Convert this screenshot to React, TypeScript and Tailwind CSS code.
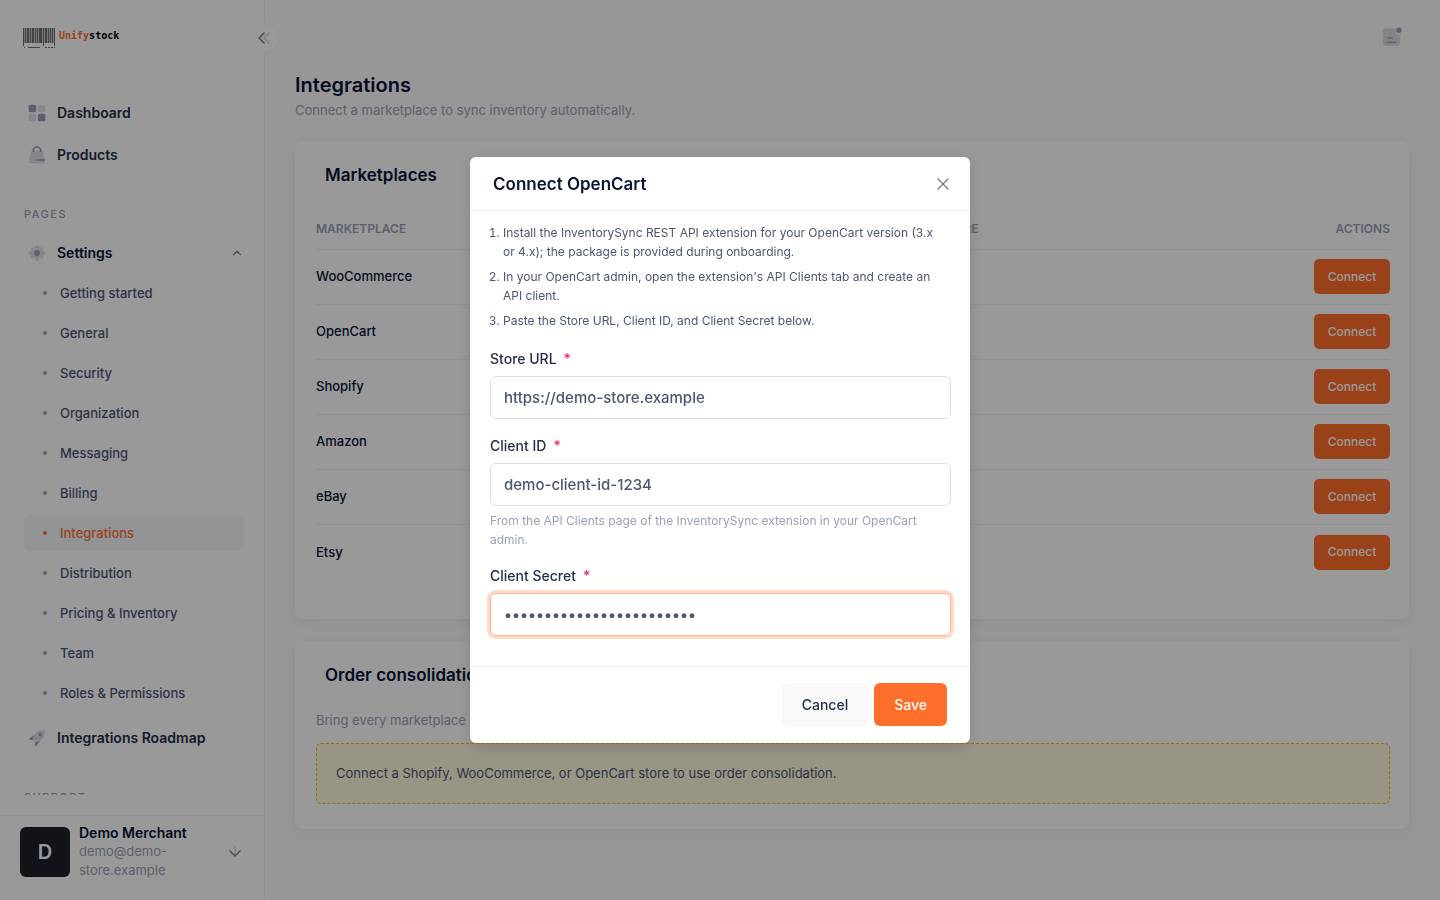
import React from 'react';
import { X, ChevronUp } from 'lucide-react';

const settingsLinks = [
  'Getting started',
  'General',
  'Security',
  'Organization',
  'Messaging',
  'Billing',
  'Integrations',
  'Distribution',
  'Pricing & Inventory',
  'Team',
  'Roles & Permissions',
];

const marketplaces = ['WooCommerce', 'OpenCart', 'Shopify', 'Amazon', 'eBay', 'Etsy'];

function Logo() {
  // x position and width of each barcode stripe
  const bars = [
    [0, 1], [2, 1], [4, 2], [7, 1], [9, 2], [12, 1], [14, 1], [16, 3],
    [20, 1], [22, 2], [25, 1], [27, 1], [29, 1], [31, 1],
  ];
  return (
    <a href="#" className="flex items-start gap-[3px]">
      <svg width="33" height="21" viewBox="0 0 33 21" fill="#6e7074">
        {bars.map(([x, w], i) => (
          <rect key={x} x={x} y="0" width={w} height={i === 0 || i === 8 || i === 13 ? 18 : 15} />
        ))}
        <path d="M0 0h32v15H0z" opacity=".4" />
        <path d="M1 19h1v1H1zM5 19h12v1H5zM22 19h2v1h-2zM25 19h2v1h-2zM28 19h2v1h-2zM31 19h1v1h-1z" />
      </svg>
      <span className="font-['DejaVu_Sans_Mono',monospace] text-[10px] leading-4 font-bold text-black">
        <span className="text-[#ff6f2c]">Unify</span>stock
      </span>
    </a>
  );
}

function DashboardIcon() {
  return (
    <svg width="20" height="20" viewBox="0 0 24 24" fill="#99a1b7">
      <rect x="2" y="2" width="9" height="9" rx="2" />
      <rect x="13" y="2" width="9" height="9" rx="2" opacity=".3" />
      <rect x="13" y="13" width="9" height="9" rx="2" />
      <rect x="2" y="13" width="9" height="9" rx="2" opacity=".3" />
    </svg>
  );
}

function ProductsIcon() {
  return (
    <svg width="20" height="20" viewBox="0 0 24 24" fill="#99a1b7">
      <path opacity=".35" d="M19.3 8.7c-.1-1-1-1.7-2-1.7H6.7c-1 0-1.900.7-2 1.700L2.500 19.800c-.1 1.200.8 2.200 2 2.200h15c1.200 0 2.100-1 2-2.200z" />
      <path d="M21.200 17H12c-.6 0-1 .4-1 1s.4 1 1 1h9.400zM6.500 8.500V6.800C6.500 3.900 9 1.500 12 1.500s5.500 2.400 5.500 5.300v1.700h-2V6.800c0-1.900-1.600-3.400-3.500-3.400S8.500 4.900 8.500 6.800v1.700z" />
    </svg>
  );
}

function SettingsIcon() {
  return (
    <svg width="20" height="20" viewBox="0 0 24 24" fill="#99a1b7">
      <path opacity=".35" d="M22.100 11.500v1c0 .8-.6 1.300-1.300 1.400l-1.900.2c-.2 0-.3.300-.2.500l.9 1.700c.4.700.1 1.500-.5 1.900l-.9.500c-.7.400-1.500.2-1.900-.5l-1-1.600-.6.3v2.200c0 1.600-1 2.300-2.700 2.300s-2.700-.7-2.700-2.300v-2.200l-.6-.3-1 1.600c-.4.700-1.200.9-1.900.5l-.9-.5c-.6-.4-.9-1.200-.5-1.900l.9-1.700c.1-.2 0-.5-.2-.5l-1.900-.2c-.7-.1-1.300-.6-1.300-1.400v-1c0-.8.6-1.300 1.300-1.400l1.900-.2c.2 0 .3-.3.2-.5l-.9-1.700c-.4-.7-.1-1.500.5-1.900l.9-.5c.7-.4 1.500-.2 1.900.5l1 1.600.6-.3V4.900C9.300 3.300 10.300 2.600 12 2.600s2.700.7 2.700 2.300v2.200l.6.300 1-1.600c.4-.7 1.200-.9 1.900-.5l.9.500c.6.4.9 1.200.5 1.900l-.9 1.700c-.1.200 0 .5.2.5l1.900.2c.7.1 1.300.6 1.300 1.400z" />
      <circle cx="12" cy="12" r="3.500" />
    </svg>
  );
}

function RocketIcon() {
  return (
    <svg width="20" height="20" viewBox="0 0 24 24" fill="#99a1b7">
      <path opacity=".35" d="M21.500 2.500c-5.500-.6-10 1.600-13 6.100L6.500 14l3.500 3.500 5.500-2c4.500-3 6.600-7.500 6-13z" />
      <path d="M8.500 8.600 2.500 13c-.5.400-.3 1.100.3 1.200l3.700.3zM15.400 15.500 11 21.500c-.4.500-1.100.3-1.200-.3l-.3-3.700z" />
      <circle cx="16" cy="8" r="2" />
    </svg>
  );
}

function NotificationIcon() {
  return (
    <svg width="22" height="22" viewBox="0 0 24 24" fill="#99a1b7">
      <path opacity=".35" d="M15.500 5c0-1 .3-1.800.8-2.500H5C3.300 2.500 2 3.800 2 5.500v13c0 1.700 1.300 3 3 3h13c1.700 0 3-1.300 3-3V8.700c-.5.2-1 .3-1.500.3-2.200 0-4-1.800-4-4z" />
      <path d="M12.500 14h-5c-.5 0-.8-.3-.8-.8s.3-.8.8-.8h5c.5 0 .8.3.8.8s-.3.8-.8.8zM16 18.500H7.500c-.5 0-.8-.3-.8-.8s.3-.8.8-.8H16c.5 0 .8.3.8.8s-.3.8-.8.8z" />
      <circle cx="19.500" cy="4.500" r="3" />
    </svg>
  );
}

function Sidebar() {
  return (
    <aside className="relative flex h-screen w-[265px] shrink-0 flex-col border-r border-[#f1f1f4] bg-white">
      <div className="px-[23px] pt-7">
        <Logo />
      </div>
      <button
        type="button"
        aria-label="Collapse sidebar"
        className="absolute top-6 -right-[14px] flex h-7 w-7 items-center justify-center rounded-full bg-white shadow-[0_0_3px_rgba(0,0,0,0.04)]"
      >
        <svg width="14" height="14" viewBox="0 0 14 14" fill="none" stroke="#78829d" strokeWidth="1.500" strokeLinecap="round" strokeLinejoin="round">
          <path d="M7 2 2 7l5 5" />
          <path opacity=".3" d="M12 2 7 7l5 5" />
        </svg>
      </button>

      <nav className="mt-[43px] mb-5 flex min-h-0 flex-1 flex-col overflow-hidden pr-5 pl-6 text-sm font-semibold text-[#252f4a]">
        <a href="#" className="flex h-[42px] shrink-0 items-center gap-[10px] pl-[3px]">
          <DashboardIcon />
          Dashboard
        </a>
        <a href="#" className="flex h-[42px] shrink-0 items-center gap-[10px] pl-[3px]">
          <ProductsIcon />
          Products
        </a>
        <div className="mt-[30px] text-[11px] leading-4 font-medium tracking-[1.500px] text-[#99a1b7]">PAGES</div>
        <button type="button" className="mt-[10px] flex h-[42px] shrink-0 items-center gap-[10px] pl-[3px] text-[#071437]">
          <SettingsIcon />
          Settings
          <ChevronUp size={14} strokeWidth={2} color="#78829d" className="ml-auto" />
        </button>
        <ul className="mt-px flex shrink-0 flex-col gap-1 text-[13px] font-medium text-[#4b5675]">
          {settingsLinks.map((label) => (
            <li key={label}>
              <a
                href="#"
                className={
                  label === 'Integrations'
                    ? 'flex h-9 items-center gap-[13px] rounded-md bg-[#f4f7fa] pl-[19px] text-[#ff6f2c]'
                    : 'flex h-9 items-center gap-[13px] pl-[19px]'
                }
              >
                <span
                  className={
                    label === 'Integrations'
                      ? 'h-1 w-1 rounded-full bg-[#ff6f2c]'
                      : 'h-1 w-1 rounded-full bg-[#99a1b7]'
                  }
                />
                {label}
              </a>
            </li>
          ))}
        </ul>
        <a href="#" className="mt-[6px] flex h-[42px] shrink-0 items-center gap-[10px] pl-[3px]">
          <RocketIcon />
          Integrations Roadmap
        </a>
        <div className="mt-[30px] shrink-0 text-[11px] leading-4 font-medium tracking-[1.500px] text-[#99a1b7]">SUPPORT</div>
      </nav>

      <div className="flex h-[85px] shrink-0 items-start border-t border-[#f1f1f4] pt-2 pr-[22px] pl-5">
        <div className="mt-[3px] flex h-[50px] w-[50px] shrink-0 items-center justify-center rounded-md bg-[#1e2129] text-xl font-semibold text-white">
          D
        </div>
        <div className="ml-[9px] w-[125px]">
          <div className="text-sm leading-[18px] font-semibold text-[#071437]">Demo Merchant</div>
          <div className="w-24 text-[13px] leading-[19px] text-[#99a1b7]">demo@demo-store.example</div>
        </div>
        <button type="button" aria-label="Account menu" className="mt-5 ml-auto">
          <svg width="14" height="14" viewBox="0 0 14 14" fill="none" stroke="#78829d" strokeWidth="1.500" strokeLinecap="round" strokeLinejoin="round">
            <path d="m2 7 5 5 5-5" />
            <path opacity=".3" d="M7 2v10" />
          </svg>
        </button>
      </div>
    </aside>
  );
}

function Marketplaces() {
  return (
    <section className="rounded-lg bg-white pr-[19px] pb-[39px] pl-[21px] shadow-[0_3px_12px_rgba(0,0,0,0.06)]">
      <h2 className="px-[9px] pt-[22px] text-[17px] leading-6 font-semibold text-[#071437]">Marketplaces</h2>
      <table className="mt-5 w-full table-fixed text-[13px]">
        <thead>
          <tr className="h-[42px] border-b border-[#f1f1f4] text-xs text-[#99a1b7]">
            <th className="w-[30%] pt-[3px] text-left font-semibold">MARKETPLACE</th>
            <th className="w-[28%] pt-[3px] text-left font-semibold">STATUS</th>
            <th className="pt-[3px] text-left font-semibold">STORE</th>
            <th className="w-[110px] pt-[3px] text-right font-semibold">ACTIONS</th>
          </tr>
        </thead>
        <tbody>
          {marketplaces.map((name) => (
            <tr key={name} className="h-[55px] border-b border-[#f1f1f4] last:h-14 last:border-b-0">
              <td className="font-medium text-[#071437]">{name}</td>
              <td />
              <td />
              <td className="text-right">
                <button type="button" className="h-[35px] w-[76px] rounded-[5px] bg-[#ff6f2c] text-xs font-medium text-white">
                  Connect
                </button>
              </td>
            </tr>
          ))}
        </tbody>
      </table>
    </section>
  );
}

function OrderConsolidation() {
  return (
    <section className="mt-[22px] rounded-lg bg-white pr-[19px] pb-[25px] pl-[21px] shadow-[0_3px_12px_rgba(0,0,0,0.06)]">
      <h2 className="px-[9px] pt-[22px] text-[17px] leading-6 font-semibold text-[#071437]">Order consolidation</h2>
      <p className="mt-[23px] text-[13px] leading-5 text-[#99a1b7]">Bring every marketplace order into a single store.</p>
      <div className="mt-[13px] rounded-[5px] border border-dashed border-[#f6c000] bg-[#fff8dd] px-[19px] py-5 text-[13px] leading-[19px] text-[#4b5675]">
        Connect a Shopify, WooCommerce, or OpenCart store to use order consolidation.
      </div>
    </section>
  );
}

type FieldProps = {
  id: string;
  label: string;
  value: string;
  type?: string;
  hint?: string;
  focused?: boolean;
};

function Field({ id, label, value, type = 'text', hint, focused }: FieldProps) {
  return (
    <div>
      <label htmlFor={id} className="block text-sm leading-5 font-medium text-[#252f4a]">
        {label}
        <span className="ml-[7px] text-[#f8285a]">*</span>
      </label>
      <input
        id={id}
        type={type}
        defaultValue={value}
        className={
          focused
            ? 'mt-[7px] block h-[43px] w-full rounded-md border border-[#ffaf8c] px-[13px] text-[15px] font-medium text-[#4b5675] shadow-[0_0_0_3px_rgba(255,111,44,0.25)] outline-none'
            : 'mt-[7px] block h-[43px] w-full rounded-md border border-[#dbdfe9] px-[13px] text-[15px] font-medium text-[#4b5675] outline-none'
        }
      />
      {hint && <p className="mt-[5px] text-xs leading-[19px] text-[#99a1b7]">{hint}</p>}
    </div>
  );
}

function ConnectDialog() {
  return (
    <div className="fixed inset-0 flex items-center justify-center bg-black/40">
      <form role="dialog" aria-labelledby="dialog-title" className="w-[500px] rounded-md bg-white shadow-[0_4px_16px_rgba(0,0,0,0.15)]">
        <div className="flex h-[54px] items-center justify-between border-b border-[#f1f1f4] pr-[17px] pl-[23px]">
          <h2 id="dialog-title" className="text-[17px] leading-6 font-semibold text-[#071437]">Connect OpenCart</h2>
          <button type="button" aria-label="Close">
            <X size={20} strokeWidth={1.500} color="#777777" />
          </button>
        </div>
        <div className="pt-3 pr-[19px] pb-[30px] pl-5">
          <ol className="flex list-decimal flex-col gap-[6px] pr-2 pl-[13px] text-xs leading-[19px] text-[#4b5675]">
            <li>Install the InventorySync REST API extension for your OpenCart version (3.x or 4.x); the package is provided during onboarding.</li>
            <li>In your OpenCart admin, open the extension's API Clients tab and create an API client.</li>
            <li>Paste the Store URL, Client ID, and Client Secret below.</li>
          </ol>
          <div className="mt-[19px] flex flex-col gap-[17px]">
            <Field id="store-url" label="Store URL" value="https://demo-store.example" />
            <Field
              id="client-id"
              label="Client ID"
              value="demo-client-id-1234"
              hint="From the API Clients page of the InventorySync extension in your OpenCart admin."
            />
            <Field id="client-secret" label="Client Secret" type="password" value="demo-client-secret-12345" focused />
          </div>
        </div>
        <div className="flex justify-end gap-[6px] border-t border-[#f1f1f4] pt-4 pr-[23px] pb-[17px]">
          <button type="button" className="h-[43px] rounded-md bg-[#f9f9f9] px-5 text-sm font-medium text-[#252f4a]">
            Cancel
          </button>
          <button type="submit" className="h-[43px] rounded-md bg-[#ff6f2c] px-5 text-sm font-medium text-white">
            Save
          </button>
        </div>
      </form>
    </div>
  );
}

export default function App() {
  return (
    <div className="flex min-h-screen bg-[#fcfcfc] font-['Inter',sans-serif]">
      <Sidebar />
      <main className="min-w-0 flex-1 pr-[31px] pb-10 pl-[30px]">
        <header className="flex h-[72px] items-center justify-end pt-[2px] pr-[6px]">
          <button type="button" aria-label="Notifications">
            <NotificationIcon />
          </button>
        </header>
        <h1 className="text-xl leading-[26px] font-semibold text-[#071437]">Integrations</h1>
        <p className="mt-[2px] mb-[21px] text-[13px] leading-5 text-[#99a1b7]">Connect a marketplace to sync inventory automatically.</p>
        <Marketplaces />
        <OrderConsolidation />
      </main>
      <ConnectDialog />
    </div>
  );
}
